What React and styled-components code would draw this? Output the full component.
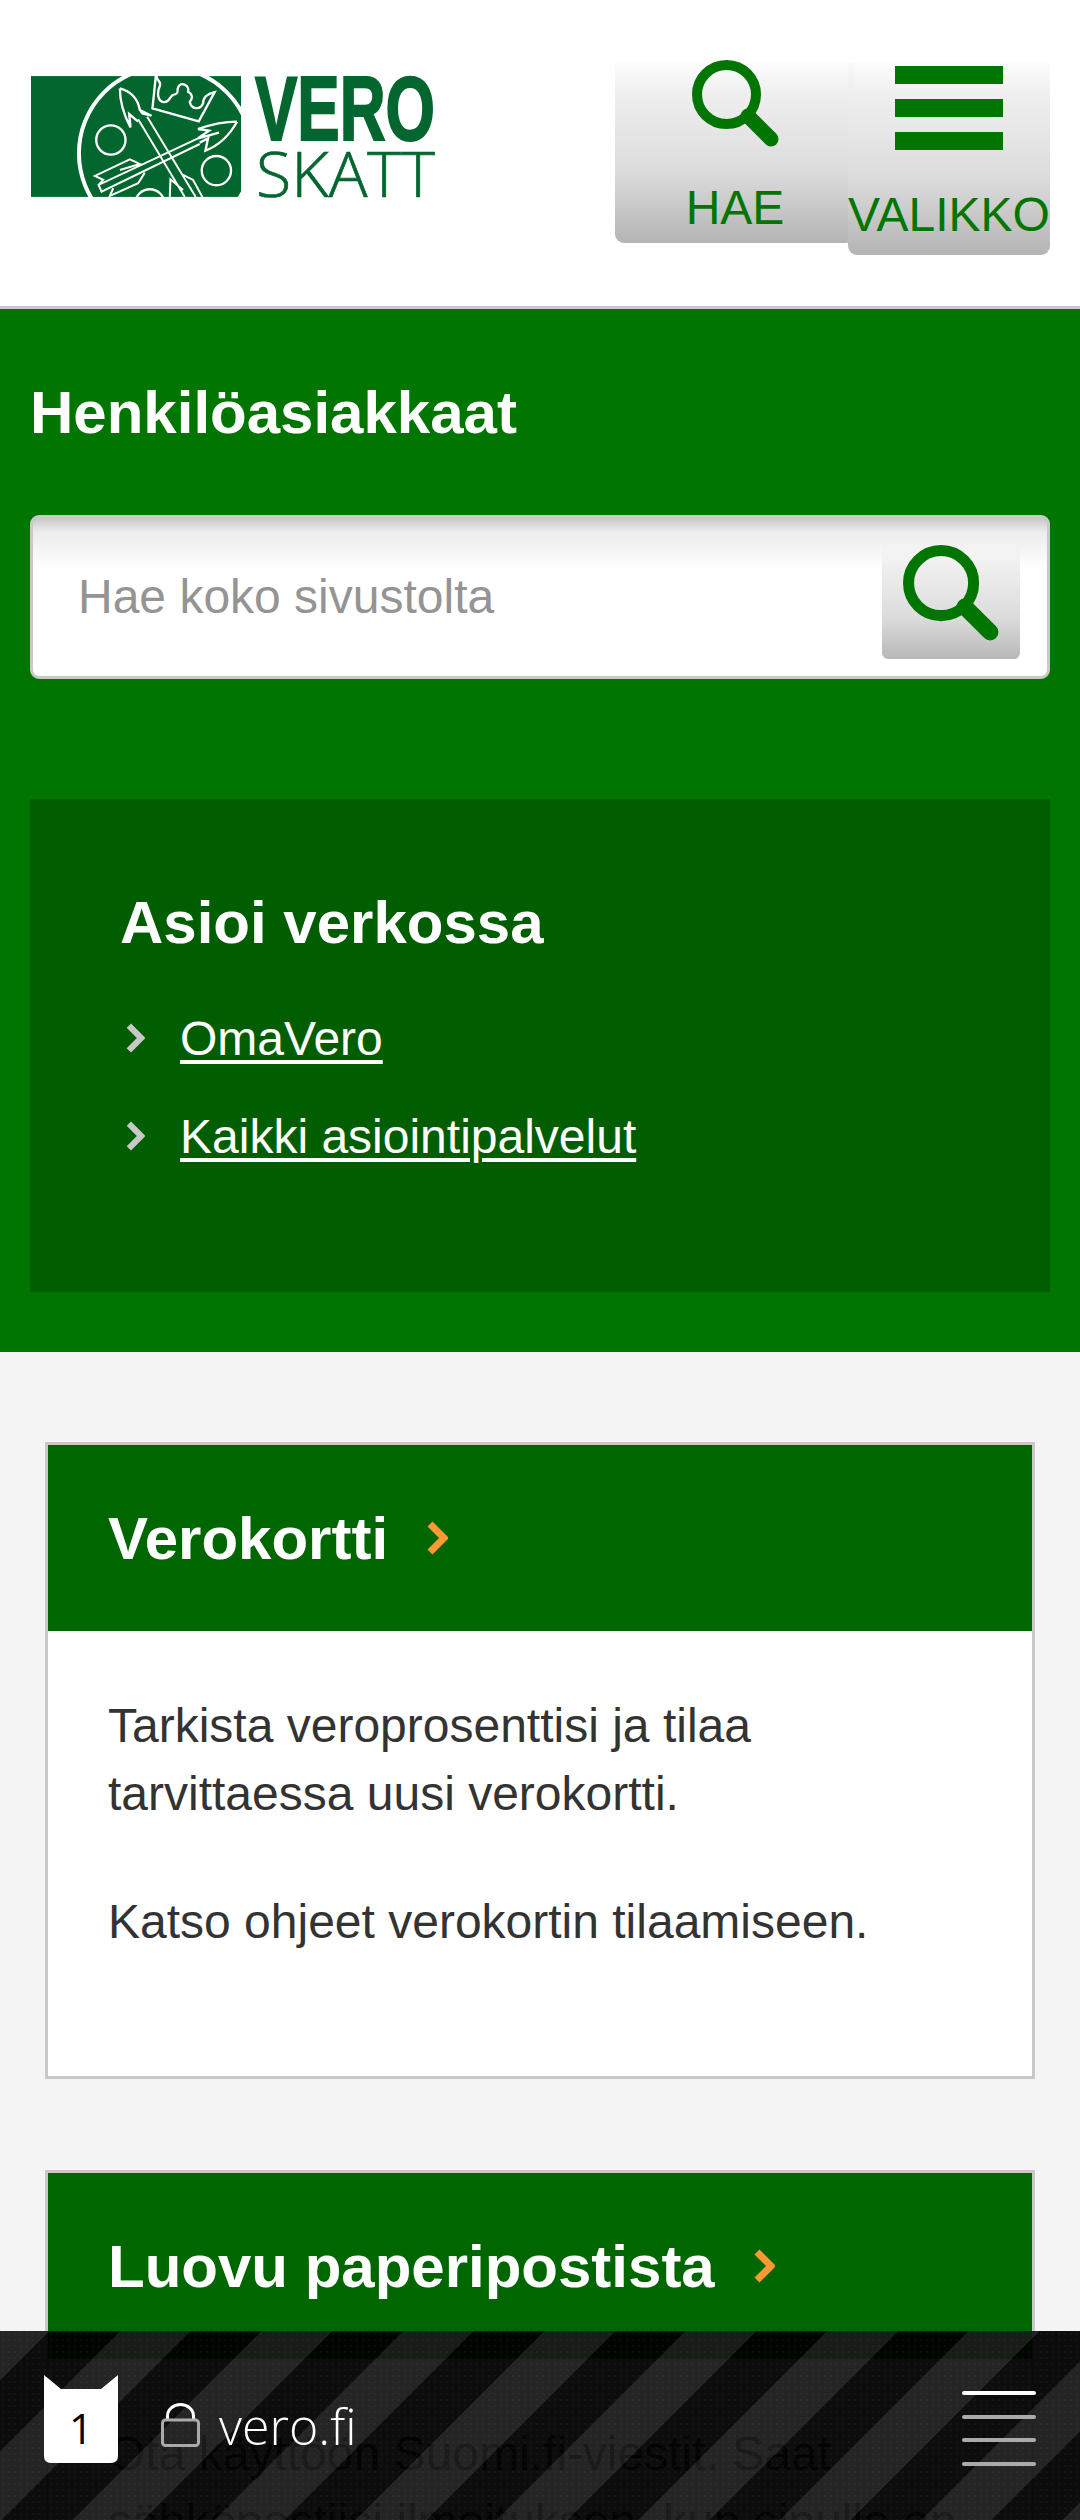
import styled, {createGlobalStyle} from 'styled-components'

const GlobalStyle = createGlobalStyle`
    html, body {
        margin: 0;
        padding: 0;
        background: #f4f4f4;
        font-family: "Liberation Sans", Arial, sans-serif;
    }
    * {
        box-sizing: border-box;
    }
`

const Page = styled.div`
    position: relative;
    width: 1080px;
    height: 2520px;
    overflow: hidden;
    background: #f4f4f4;
`

const Header = styled.header`
    display: flex;
    justify-content: space-between;
    align-items: flex-start;
    height: 309px;
    padding: 62px 30px 0 31px;
    background: #fff;
    border-bottom: 3px solid #c8c8c8;
`

const Logo = styled.div`
    display: flex;
    gap: 14px;
    margin-top: 14px;
    svg {
        overflow: visible;
    }
`

const Actions = styled.div`
    display: flex;
    align-items: flex-start;
`

const TopButton = styled.div`
    display: flex;
    flex-direction: column;
    align-items: center;
    width: ${props => props.$width}px;
    height: ${props => props.$height}px;
    margin-left: ${props => props.$overlap || 0}px;
    border-radius: 0 0 9px 9px;
    background: linear-gradient(to bottom, rgba(245, 245, 245, .2), #f0f0f0 15%, #dcdcdc 60%, #b4b4b4);
    color: #007500;
    font-size: 48px;
    line-height: 55px;
    white-space: nowrap;
    > :first-child {
        flex: none;
        margin-top: ${props => props.$iconTop}px;
    }
    span {
        margin-top: ${props => props.$labelGap}px;
    }
`

const Bars = styled.div`
    display: flex;
    flex-direction: column;
    gap: 15px;
    width: 108px;
    i {
        display: block;
        height: 18px;
        background: #007500;
    }
`

const GreenSection = styled.section`
    height: 1043px;
    padding: 69px 30px 0;
    background: #007500;
`

const SectionTitle = styled.h1`
    margin: 0 0 67px;
    color: #fff;
    font-size: 60px;
    line-height: 70px;
    font-weight: 700;
`

const SearchBox = styled.div`
    display: flex;
    align-items: center;
    justify-content: space-between;
    height: 164px;
    margin-bottom: 120px;
    padding: 22px 27px 17px 45px;
    border: 3px solid #c8c8c8;
    border-radius: 9px;
    background: linear-gradient(to bottom, #c8c8c8, #ededed 14px, #f4f4f4 30px, #fff 52px);
`

const Placeholder = styled.span`
    margin-bottom: 6px;
    color: #949494;
    font-size: 48px;
`

const SearchButton = styled.div`
    display: flex;
    justify-content: center;
    align-self: stretch;
    width: 138px;
    padding-top: 5px;
    border-radius: 0 0 6px 6px;
    background: linear-gradient(to bottom, rgba(250, 250, 250, 0), #f0f0f0 20%, #dcdcdc 65%, #b8b8b8);
`

const Panel = styled.div`
    height: 493px;
    padding: 89px 90px 0;
    background: #005e00;
`

const PanelTitle = styled.h2`
    margin: 0 0 31px;
    color: #fff;
    font-size: 60px;
    line-height: 70px;
    font-weight: 700;
`

const LinkList = styled.ul`
    margin: 0;
    padding: 0;
    list-style: none;
`

const LinkItem = styled.li`
    display: flex;
    align-items: center;
    gap: 35px;
    height: 98px;
    padding-left: 6px;
    a {
        color: #fff;
        font-size: 48px;
        text-decoration: underline;
        text-decoration-thickness: 4px;
        text-underline-offset: 5px;
    }
`

const Cards = styled.div`
    display: flex;
    flex-direction: column;
    gap: 91px;
    padding: 90px 45px 0;
`

const Card = styled.article`
    height: ${props => props.$height}px;
    border: 3px solid #c8c8c8;
    background: #fff;
`

const CardHead = styled.div`
    display: flex;
    align-items: center;
    gap: 39px;
    height: 186px;
    padding-left: 60px;
    background: #006600;
    color: #fff;
    font-size: 60px;
    font-weight: 700;
`

const CardBody = styled.div`
    padding: 61px 60px 0;
    color: #333;
    font-size: 48px;
    line-height: 68px;
    p {
        margin: 0 0 60px;
    }
`

const BrowserBar = styled.div`
    position: absolute;
    left: 0;
    right: 0;
    bottom: 0;
    display: flex;
    align-items: flex-start;
    justify-content: space-between;
    height: 189px;
    padding: 44px 44px 0 44px;
    background-image:
        radial-gradient(circle, rgba(255, 255, 255, .03) 1px, transparent 1.6px),
        repeating-linear-gradient(135deg, rgba(25, 25, 25, .95) 0 35px, rgba(0, 0, 0, .95) 35px 85px, rgba(25, 25, 25, .95) 85px 100px);
    background-size: 6px 6px, auto;
`

const Address = styled.div`
    display: flex;
    align-items: flex-start;
`

const TabCount = styled.div`
    position: relative;
    width: 74px;
    height: 88px;
    color: #000;
    font-family: "Open Sans", sans-serif;
    font-size: 42px;
    text-align: center;
    svg {
        position: absolute;
        inset: 0;
    }
    span {
        position: relative;
        display: block;
        padding-top: 28px;
        line-height: 50px;
    }
`

const Lock = styled.svg`
    margin: 28px 19px 0 43px;
`

const Host = styled.span`
    margin-top: 17px;
    color: #fff;
    font-family: "Open Sans", sans-serif;
    font-weight: 300;
    font-size: 50px;
    line-height: 68px;
`

const MenuLines = styled.div`
    display: flex;
    flex-direction: column;
    gap: 19.5px;
    width: 74px;
    margin-top: 16px;
`

const MenuLine = styled.i`
    display: block;
    height: 4px;
    border-radius: 2px;
    background: ${props => (props.$active ? '#fff' : '#aaa')};
`

const Magnifier = ({size}) => (
    <svg width={size} height={size} viewBox="0 0 87 87">
        <circle cx="34.5" cy="34.5" r="29.5" fill="none" stroke="#007500" strokeWidth="10"/>
        <path d="M56 56 L79 79" stroke="#007500" strokeWidth="15" strokeLinecap="round"/>
    </svg>
)

const Chevron = ({color, width, height, strokeWidth}) => (
    <svg width={width} height={height} viewBox="0 0 21 34">
        <path d="M3 3 L17 17 L3 31" fill="none" stroke={color} strokeWidth={strokeWidth}/>
    </svg>
)

const Emblem = () => (
    <svg width="210" height="121" viewBox="33 48 631 363" style={{overflow: 'hidden'}}>
        <rect x="33" y="48" width="631" height="363" fill="#03662f"/>
        <g fill="none" stroke="#fff" strokeWidth="7">
            <circle cx="437" cy="280" r="260" strokeWidth="12"/>
            <circle cx="273" cy="240" r="44"/>
            <circle cx="590" cy="332" r="44"/>
            <circle cx="390" cy="432" r="44"/>
            <path d="M410 48 C412 65 425 62 420 78 C410 100 415 125 432 126 C450 128 450 105 462 104 C480 100 470 92 475 82 C482 62 510 75 505 95 C515 100 522 112 510 125 C515 150 542 150 550 130 C550 112 565 100 585 96 L537 184 L398 145 L408 48"/>
            <path d="M300 85 C335 95 355 120 360 150 L395 167 L368 160 L362 153 L380 160 M300 85 C300 130 315 170 332 202 L328 162 L355 185"/>
            <path d="M652 185 C610 185 570 195 535 207 L568 212 L535 235 L598 218 M652 185 C630 225 600 255 557 272 L565 235 L540 248"/>
            <path d="M355 178 L495 411 M382 170 L528 411 M450 411 L452 358 L490 390 M490 345 L520 360 L548 411" strokeWidth="6"/>
            <path d="M535 235 L236 375 L245 395 L540 252 M236 375 L250 360 L225 348 L330 298 L360 312 L300 330 M375 338 L355 370 L270 408 L280 385" strokeWidth="6"/>
        </g>
    </svg>
)

const Wordmark = () => (
    <svg width="180" height="122" viewBox="0 0 180 122">
        <text x="0" y="64" fontFamily="Liberation Sans" fontWeight="700" fontSize="90" fill="#03662f" stroke="#03662f" strokeWidth="2" textLength="180" lengthAdjust="spacingAndGlyphs">VERO</text>
        <text x="1" y="121" fontFamily="Open Sans" fontWeight="300" fontSize="62" fill="#03662f" stroke="#03662f" strokeWidth="0.7" textLength="179" lengthAdjust="spacingAndGlyphs">SKATT</text>
    </svg>
)

const App = () => {
    return (
        <Page>
            <GlobalStyle/>
            <Header>
                <Logo>
                    <Emblem/>
                    <Wordmark/>
                </Logo>
                <Actions>
                    <TopButton $width={240} $height={181} $iconTop={-2} $labelGap={33}>
                        <Magnifier size={87}/>
                        <span>HAE</span>
                    </TopButton>
                    <TopButton $width={202} $height={193} $overlap={-7} $iconTop={4} $labelGap={37}>
                        <Bars><i/><i/><i/></Bars>
                        <span>VALIKKO</span>
                    </TopButton>
                </Actions>
            </Header>
            <GreenSection>
                <SectionTitle>Henkilöasiakkaat</SectionTitle>
                <SearchBox>
                    <Placeholder>Hae koko sivustolta</Placeholder>
                    <SearchButton>
                        <Magnifier size={96}/>
                    </SearchButton>
                </SearchBox>
                <Panel>
                    <PanelTitle>Asioi verkossa</PanelTitle>
                    <LinkList>
                        <LinkItem>
                            <Chevron color="#c8c8c8" width={19} height={30} strokeWidth={7}/>
                            <a href="#omavero">OmaVero</a>
                        </LinkItem>
                        <LinkItem>
                            <Chevron color="#c8c8c8" width={19} height={30} strokeWidth={7}/>
                            <a href="#kaikki">Kaikki asiointipalvelut</a>
                        </LinkItem>
                    </LinkList>
                </Panel>
            </GreenSection>
            <Cards>
                <Card $height={637}>
                    <CardHead>
                        Verokortti
                        <Chevron color="#ff9933" width={21} height={34} strokeWidth={7}/>
                    </CardHead>
                    <CardBody>
                        <p>Tarkista veroprosenttisi ja tilaa tarvittaessa uusi verokortti.</p>
                        <p>Katso ohjeet verokortin tilaamiseen.</p>
                    </CardBody>
                </Card>
                <Card $height={600}>
                    <CardHead>
                        Luovu paperipostista
                        <Chevron color="#ff9933" width={21} height={34} strokeWidth={7}/>
                    </CardHead>
                    <CardBody>
                        <p>Ota käyttöön Suomi.fi-viestit. Saat sähköpostiisi ilmoituksen, kun sinulle on uusi viesti.</p>
                    </CardBody>
                </Card>
            </Cards>
            <BrowserBar>
                <Address>
                    <TabCount>
                        <svg width="74" height="88" viewBox="0 0 74 88">
                            <path d="M0 0 L17 14 L57 14 L74 0 L74 81 Q74 88 67 88 L7 88 Q0 88 0 81 Z" fill="#fff"/>
                        </svg>
                        <span>1</span>
                    </TabCount>
                    <Lock width="39" height="44" viewBox="0 0 39 44">
                        <path d="M6.5 17 V13 a13 11.5 0 0 1 26 0 V17" fill="none" stroke="#fff" strokeWidth="3"/>
                        <rect x="1.5" y="17" width="36" height="25.5" rx="3" fill="none" stroke="#aaa" strokeWidth="3"/>
                    </Lock>
                    <Host>vero.fi</Host>
                </Address>
                <MenuLines>
                    <MenuLine $active/>
                    <MenuLine/>
                    <MenuLine/>
                    <MenuLine/>
                </MenuLines>
            </BrowserBar>
        </Page>
    )
}

export default App
